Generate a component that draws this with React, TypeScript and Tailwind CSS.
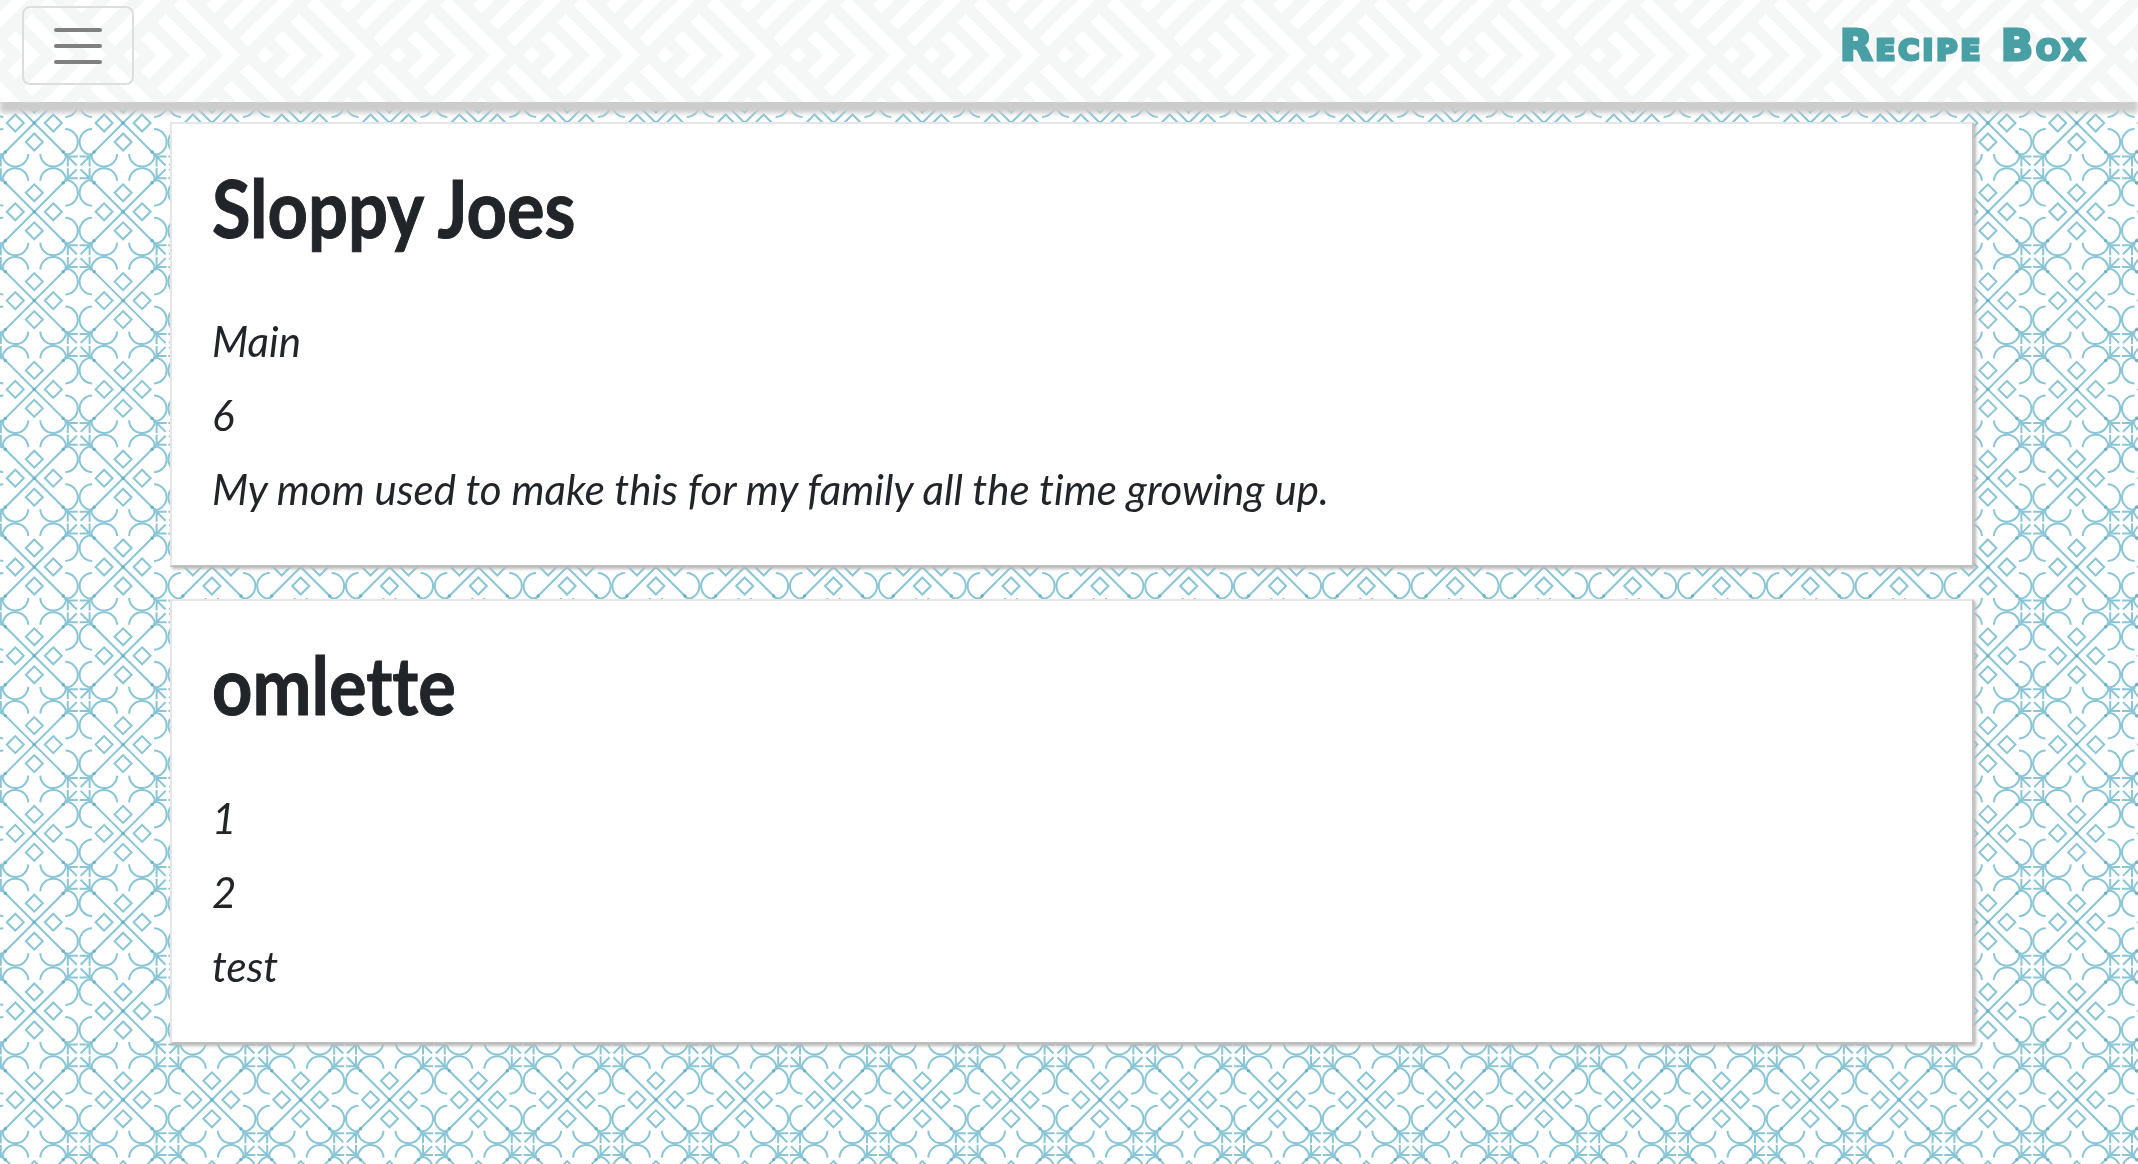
const cards = [
  { title: "Sloppy Joes", lines: ["Main", "6", "My mom used to make this for my family all the time growing up."] },
  { title: "omlette", lines: ["1", "2", "test"] },
];

const range = (n: number) => Array.from({ length: n }, (_, i) => i);

// chevron wallpaper behind the navbar
function HeaderPattern() {
  const size = 133.33;
  return (
    <svg className="absolute inset-0 w-full h-full" aria-hidden="true">
      <defs>
        <filter id="soft-h"><feGaussianBlur stdDeviation="0.4" /></filter>
        <g id="chevrons" fill="none" stroke="#ffffff" strokeWidth="11.8">
          <path d="M0 -8.3 L8.3 0 L0 8.3 L-8.3 0 Z" fill="#ffffff" stroke="none" />
          <path d="M13.3 -20 L33.3 0 L13.3 20" />
          <path d="M29.7 -37 L66.7 0 L29.7 37" />
          <path d="M46 -54 L100 0 L46 54" />
          <path d="M112.3 -12.7 L190 -90" />
          <path d="M112.3 12.7 L190 90" />
          <path d="M95.6 -29.3 L170 -104" />
          <path d="M95.6 29.3 L170 104" />
          <path d="M79 -46 L130 -97" />
          <path d="M79 46 L130 97" />
        </g>
      </defs>
      <g filter="url(#soft-h)">
        {range(19).map((i) => (
          <use key={i} href="#chevrons" x={265 + (i - 3) * size} y={55} />
        ))}
      </g>
    </svg>
  );
}

// blue tile on the page background
function PagePattern() {
  const size = 88.8;
  return (
    <svg className="absolute inset-0 w-full h-full" aria-hidden="true">
      <defs>
        <filter id="soft-p"><feGaussianBlur stdDeviation="0.55" /></filter>
        <g id="quarter" fill="none">
          <path d="M0 0 L42.5 42.5 M33.5 33.5 H43.5 M33.5 33.5 V43.5" />
          <path d="M31 6 A13 13 0 0 1 30 32" />
          <path d="M6 31 A13 13 0 0 0 32 30" />
          <path d="M19 -8.5 L27.5 0 L19 8.5 L10.5 0 Z" />
          <circle cx="29" cy="29" r="1.7" fill="#6cb0c6" stroke="none" />
        </g>
        <g id="tile">
          <use href="#quarter" />
          <use href="#quarter" transform="rotate(90)" />
          <use href="#quarter" transform="rotate(180)" />
          <use href="#quarter" transform="rotate(270)" />
          <circle r="1.7" fill="#6cb0c6" stroke="none" />
        </g>
      </defs>
      <g filter="url(#soft-p)" stroke="#8ac5d6" strokeWidth="2">
        {range(15).map((row) =>
          range(26).map((col) => (
            <use key={row + "-" + col} href="#tile" x={34.3 + col * size} y={123 + (row - 1) * size} />
          ))
        )}
      </g>
    </svg>
  );
}

export default function App() {
  return (
    <div className="relative isolate min-h-[1164px] overflow-hidden bg-white text-[#212529] [font-variant-ligatures:none]">
      <div className="absolute inset-0 -z-10">
        <PagePattern />
      </div>

      <header className="relative h-[102px] bg-[#f5f7f6] shadow-[0_11px_5px_#cccccc] flex items-center justify-between pl-[22px] pr-[50px] overflow-visible">
        <HeaderPattern />
        <button className="relative w-[112px] h-[79px] mb-[11px] border-2 border-[#dddddd] rounded-lg flex flex-col items-center justify-center gap-3">
          <span className="block w-[48px] h-1 rounded-full bg-[#808080]" />
          <span className="block w-[48px] h-1 rounded-full bg-[#808080]" />
          <span className="block w-[48px] h-1 rounded-full bg-[#808080]" />
        </button>
        <span className="relative mb-[10px] font-['DejaVu_Sans',sans-serif] font-bold text-[42px] leading-none tracking-[3px] text-[#48a0a5] [font-variant:small-caps] [-webkit-text-stroke:3px_#48a0a5]">
          Recipe Box
        </span>
      </header>

      <main className="pl-[170px] pr-[164px] pt-[20px] flex flex-col gap-[32px]">
        {cards.map((card) => (
          <section
            key={card.title}
            className="h-[445px] bg-white border-2 border-[#e6e6e6] border-r-[#c4c4c4] border-b-[#bdbdbd] shadow-[2px_2px_3px_#bbbbbb] pl-[40px] pt-[35px]"
          >
            <h2 className="font-['Lato',sans-serif] font-bold text-[80px] leading-[96px] mb-[49px] origin-left scale-x-[0.88] [-webkit-text-stroke:1px_#212529]">
              {card.title}
            </h2>
            {card.lines.map((line) => (
              <p key={line} className="font-['Lato',sans-serif] italic text-[42px] leading-[74px]">
                {line}
              </p>
            ))}
          </section>
        ))}
      </main>
    </div>
  );
}
